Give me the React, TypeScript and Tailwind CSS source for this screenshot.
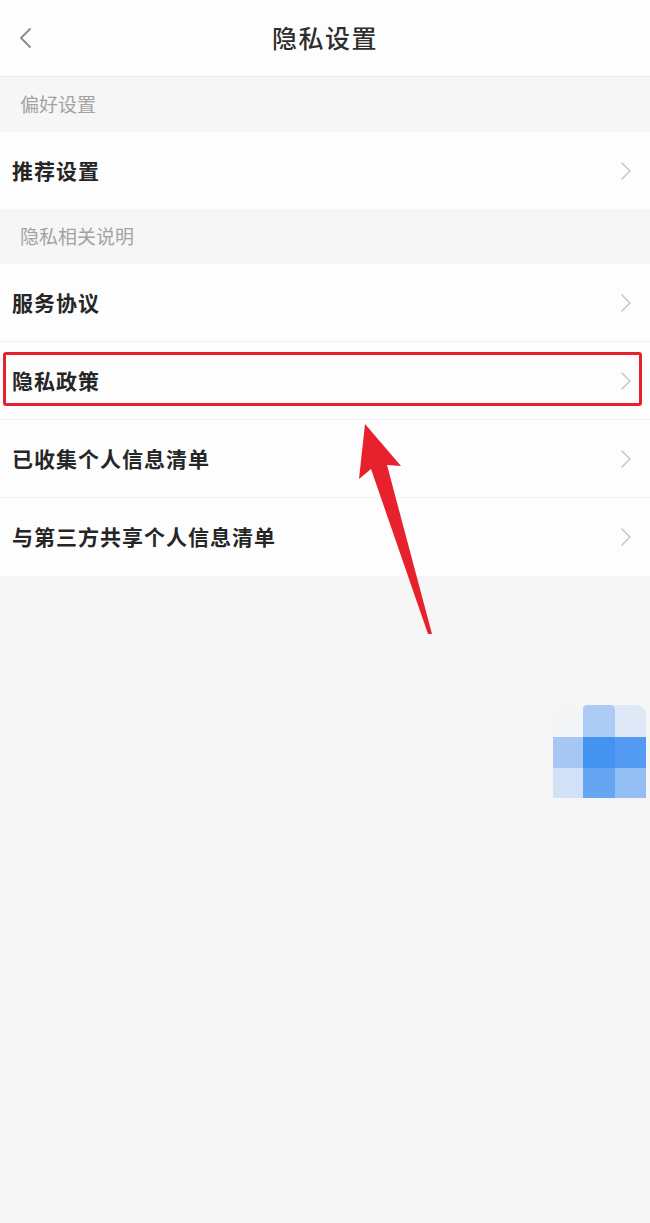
const rowFont = { fontFamily: '"Noto Sans CJK SC", "Noto Sans", sans-serif' }

const Chevron = () => (
  <svg className="w-[12px] h-[20px] text-[#c8c8c8]" viewBox="0 0 12 20" fill="none">
    <path d="M2 2l8 8-8 8" stroke="currentColor" strokeWidth={1.6} strokeLinecap="round" strokeLinejoin="round" />
  </svg>
)

const SectionTitle = ({ label }: { label: string }) => (
  <div className="h-[55px] flex items-center pl-[20px] text-[19px] text-[#a3a3a3]">{label}</div>
)

const Row = ({ label, last, short }: { label: string; last?: boolean; short?: boolean }) => (
  <div
    className={`${short ? "h-[77px]" : "h-[78px]"} flex items-center justify-between bg-[#fdfdfd] pl-[12px] pr-[18px] ${
      last ? "" : "border-b border-[#f0f0f0]"
    }`}
  >
    <span className="text-[21px] font-bold text-[#262626] tracking-[1px]">{label}</span>
    <Chevron />
  </div>
)

// blurred floating widget, 3x3 blocks
const blocks = [
  "bg-[#f3f5f8]", "bg-[#a9c9f5] rounded-t-[4px]", "bg-[#dde8f8] rounded-tr-[10px]",
  "bg-[#a2c5f4]", "bg-[#3c8ef0]", "bg-[#4b97f2]",
  "bg-[#d0e1f8]", "bg-[#5fa1f2]", "bg-[#8fbdf4]",
]

export default function App() {
  return (
    <div className="relative w-[650px] h-[1223px] bg-[#f6f6f6] overflow-hidden" style={rowFont}>
      {/* Header */}
      <div className="relative h-[77px] bg-[#fdfdfd] border-b border-[#ececec] flex items-center justify-center">
        <svg className="absolute left-[18px] top-[27px] w-[14px] h-[22px] text-[#8a8a8a]" viewBox="0 0 14 22" fill="none">
          <path d="M12 2L3 11l9 9" stroke="currentColor" strokeWidth={1.8} strokeLinecap="round" strokeLinejoin="round" />
        </svg>
        <span className="text-[25px] font-medium text-[#2e2e2e] tracking-[1.5px] -mt-[1px]">隐私设置</span>
      </div>

      <SectionTitle label="偏好设置" />
      <Row label="推荐设置" last short />

      <SectionTitle label="隐私相关说明" />
      <Row label="服务协议" />
      <div className="relative">
        <Row label="隐私政策" />
        <div className="absolute left-[3px] top-[10px] w-[639px] h-[54px] border-[3px] border-[#e5212d] rounded-[3px]" />
      </div>
      <Row label="已收集个人信息清单" />
      <Row label="与第三方共享个人信息清单" last />

      {/* annotation arrow */}
      <svg className="absolute left-0 top-0 pointer-events-none" width={650} height={1223}>
        <polygon
          points="365,424 401,466 387,465 432,634 428,634 371,469 359,479"
          fill="#e8222d"
        />
      </svg>

      {/* floating widget */}
      <div className="absolute left-[553px] top-[705px] grid grid-cols-[30px_32px_31px] grid-rows-[32px_31px_30px] opacity-95">
        {blocks.map((c, i) => (
          <div key={i} className={c} />
        ))}
      </div>
    </div>
  )
}
